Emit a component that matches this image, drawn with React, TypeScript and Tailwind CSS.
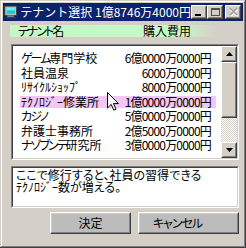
import React from 'react';

// テナント一覧 (kana: true の部分はプロポーショナル風に詰める)
const tenants: { name: [string, boolean?][]; price: string; selected?: boolean }[] = [
  { name: [['ゲーム', true], ['専門学校']], price: '6億0000万0000円' },
  { name: [['社員温泉']], price: '6000万0000円' },
  { name: [['ﾘｻｲｸﾙｼｮｯﾌﾟ']], price: '8000万0000円' },
  { name: [['ﾃｸﾉﾛｼﾞｰ修業所']], price: '1億0000万0000円', selected: true },
  { name: [['カジノ', true]], price: '5億0000万0000円' },
  { name: [['弁護士事務所']], price: '2億5000万0000円' },
  { name: [['ナゾブンテ', true], ['研究所']], price: '3億0000万0000円' },
];

const Raised: React.FC<{ className?: string; children?: React.ReactNode }> = ({ className = '', children }) => (
  <div className={`border border-t-white border-l-white border-r-[#404040] border-b-[#404040] ${className}`}>
    <div className="w-full h-full border border-t-[#d4d0c8] border-l-[#d4d0c8] border-r-[#808080] border-b-[#808080] flex items-center justify-center">
      {children}
    </div>
  </div>
);

const Sunken: React.FC<{ className?: string; children?: React.ReactNode }> = ({ className = '', children }) => (
  <div className={`border border-t-[#808080] border-l-[#808080] border-r-white border-b-white ${className}`}>
    <div className="w-full h-full border border-t-[#404040] border-l-[#404040] border-r-[#d4d0c8] border-b-[#d4d0c8] bg-white">
      {children}
    </div>
  </div>
);

const ArrowUp = () => (
  <svg width="7" height="4" viewBox="0 0 7 4">
    <path d="M3.5 0 L7 4 L0 4 Z" fill="#000" />
  </svg>
);

const ArrowDown = () => (
  <svg width="7" height="4" viewBox="0 0 7 4">
    <path d="M0 0 L7 0 L3.5 4 Z" fill="#000" />
  </svg>
);

export default function App() {
  return (
    <div className="relative w-[246px] h-[248px] bg-[#d4d0c8] p-[3px] flex flex-col shadow-[inset_-1px_-1px_0_#404040,inset_1px_1px_0_#d4d0c8,inset_-2px_-2px_0_#808080,inset_2px_2px_0_#ffffff] font-['Noto_Sans_CJK_JP',sans-serif] text-black">
      {/* title bar */}
      <div className="h-[18px] bg-[#0c226c] flex items-center pl-[1px] pr-[2px]">
        <svg width="16" height="16" viewBox="0 0 16 16">
          <rect x="1" y="1" width="14" height="11" fill="#c0c0c0" stroke="#404040" strokeWidth="1" />
          <rect x="3" y="3" width="10" height="7" fill="#20c8c8" />
          <rect x="3" y="3" width="10" height="3" fill="#70f0f0" />
          <rect x="4" y="12" width="8" height="3" fill="#808080" />
          <rect x="2" y="14" width="12" height="1.5" fill="#404040" />
        </svg>
        <span className="ml-[3px] text-white text-[12px] leading-none whitespace-nowrap">テナント選択 1億8746万4000円</span>
        <div className="ml-auto flex items-center">
          <Raised className="w-[16px] h-[14px] bg-[#d4d0c8]">
            <div className="w-[6px] h-[2px] bg-black mt-[5px] mr-[2px]" />
          </Raised>
          <Raised className="w-[16px] h-[14px] bg-[#d4d0c8]">
            <div className="w-[9px] h-[8px] border border-[#505050] border-t-2" />
          </Raised>
          <Raised className="ml-[2px] w-[16px] h-[14px] bg-[#d4d0c8]">
            <svg width="9" height="8" viewBox="0 0 9 8">
              <path d="M1 1 L8 8 M8 1 L1 8" stroke="#ffffff" strokeWidth="1.6" transform="translate(0.6 0.6)" />
              <path d="M1 0 L8 7 M8 0 L1 7" stroke="#a0a0a0" strokeWidth="1.6" />
            </svg>
          </Raised>
        </div>
      </div>

      <div className="flex flex-col [font-feature-settings:'palt']">
        {/* column header */}
        <div className="mt-[4px] ml-[7px] w-[207px] h-[12px] flex items-center bg-[linear-gradient(to_right,#c4f8c4_0%,#c8f6c8_82%,#d4d0c8_100%)] text-[12px] leading-none">
          <span className="w-[133px] pl-[8px] whitespace-nowrap">
            <span className="tracking-[-2px]">テナント</span>名
          </span>
          <span>購入費用</span>
        </div>

        {/* tenant list */}
        <Sunken className="mt-[7px] ml-[8px] w-[228px] h-[116px]">
          <div className="flex h-full">
            <div className="flex-1 pt-[5px]">
              {tenants.map((t, i) => (
                <div key={i} className="h-[14.5px] flex items-center pl-[7px] pr-[5px]">
                  <div className={`w-full h-[12px] flex items-center justify-between text-[12px] leading-none whitespace-nowrap ${t.selected ? 'bg-[#f4c6f4]' : ''}`}>
                    <span className="pl-[1px]">
                      {t.name.map(([s, kana], j) => (
                        <span key={j} className={kana ? 'tracking-[-2px]' : ''}>{s}</span>
                      ))}
                    </span>
                    <span className="pr-[5px] tracking-[-0.8px]">{t.price}</span>
                  </div>
                </div>
              ))}
            </div>
            <div className="w-[16px] flex flex-col">
              <Raised className="h-[16px] bg-[#d4d0c8]">
                <ArrowUp />
              </Raised>
              <Raised className="h-[56px] bg-[#d4d0c8]" />
              <div className="flex-1 bg-[repeating-conic-gradient(#d4d0c8_0%_25%,#ffffff_0%_50%)] bg-[length:2px_2px]" />
              <Raised className="h-[16px] bg-[#d4d0c8]">
                <ArrowDown />
              </Raised>
            </div>
          </div>
        </Sunken>

        {/* description */}
        <Sunken className="mt-[6px] ml-[8px] w-[228px] h-[42px]">
          <p className="pl-[3px] pt-[1px] text-[12px] leading-[11.5px]">
            ここで修行すると、社員の習得できる
            <br />
            ﾃｸﾉﾛｼﾞｰ数が増える。
          </p>
        </Sunken>

        {/* buttons */}
        <div className="mt-[4px] flex pl-[47px] gap-[7px]">
          <Raised className="w-[81px] h-[22px] bg-[#bcbcbc]">
            <span className="text-[12px] leading-none">決定</span>
          </Raised>
          <Raised className="w-[101px] h-[22px] bg-[#bcbcbc]">
            <span className="text-[12px] leading-none mr-[22px] tracking-[-1px]">キャンセル</span>
          </Raised>
        </div>
      </div>

      {/* mouse cursor */}
      <svg className="absolute left-[107px] top-[92px]" width="12" height="19" viewBox="0 0 12 19">
        <path d="M0.5 0.5 L0.5 16 L4.2 12.4 L6.8 18.2 L9 17.2 L6.5 11.6 L11.5 11.6 Z" fill="#ffffff" stroke="#000000" strokeWidth="1" />
      </svg>
    </div>
  );
}
